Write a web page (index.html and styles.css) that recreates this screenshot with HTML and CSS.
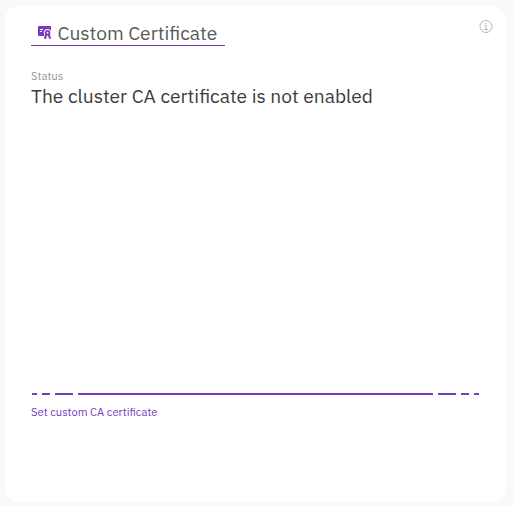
FILE: index.html
```html
<!DOCTYPE html>
<html lang="en">
<head>
<meta charset="utf-8">
<title>Custom Certificate</title>
<link rel="stylesheet" href="styles.css">
</head>
<body>
<main class="card">
  <header class="card-header">
    <h1 class="title">
      <svg class="title-icon" viewBox="0 0 14 14" aria-hidden="true">
        <rect width="13" height="10" rx="1" fill="#753bbd"/>
        <path stroke="#fff" d="M2 3.5h3M2 5.5h2"/>
        <circle cx="9.5" cy="6.8" r="3.7" fill="#fff"/>
        <path fill="#fff" d="M6.5 8.5h6.5V14H5.4z"/>
        <circle cx="9.5" cy="6.8" r="1.9" fill="none" stroke="#753bbd" stroke-width="1.8"/>
        <path fill="#753bbd" d="M7.2 8.5l2 .8-1.3 3.8-2-.6zM11.8 8.5l-2 .8 1.4 3.8 1.9-.6z"/>
      </svg>
      <span class="title-text">Custom Certificate</span>
    </h1>
    <svg class="info" viewBox="0 0 14 14" fill="none" stroke="#b5b5b5" aria-hidden="true">
      <circle cx="7" cy="6.5" r="6"/>
      <path d="M5.5 5.5h1.6v4M5.2 9.5h3.7"/>
      <path d="M6.3 3.5h1.2"/>
    </svg>
  </header>
  <section class="status">
    <div class="label">Status</div>
    <div class="value">The cluster CA certificate is not enabled</div>
  </section>
  <footer class="actions">
    <div class="divider"><i class="dot"></i><i class="dash"></i><i class="bar"></i><i class="line"></i><i class="bar"></i><i class="dash"></i><i class="dot"></i></div>
    <a class="link">Set custom CA certificate</a>
  </footer>
</main>
</body>
</html>
```
FILE: styles.css
```css
* { box-sizing: border-box; }
body {
  margin: 0;
  padding: 6px 7px 3px 5px;
  height: 505px;
  background: #f9f9f9;
  font-family: "IBM Plex Sans", Roboto, sans-serif;
}
.card {
  display: flex;
  flex-direction: column;
  height: 496px;
  padding: 14px 13px 82px 26px;
  border-radius: 14px;
  background: #fff;
}
.card-header {
  display: flex;
  justify-content: space-between;
  align-items: flex-start;
}
.title {
  display: flex;
  width: 194px;
  height: 26px;
  margin: 0;
  padding-left: 7px;
  border-bottom: 1px solid #753bbd;
  font-size: 19.2px;
  font-weight: 400;
  line-height: 25px;
  color: #595959;
}
.title-icon {
  width: 14px;
  height: 14px;
  margin: 6px 5.5px 0 0;
}
.title-text { white-space: nowrap; }
.info { width: 14px; height: 14px; }
.status { margin-top: 23px; white-space: nowrap; }
.label {
  font-size: 11.2px;
  line-height: 14px;
  color: #969696;
}
.value {
  font-size: 19.2px;
  line-height: 26px;
  color: #3c3c3c;
}
.actions { margin-top: auto; }
.divider {
  display: flex;
  gap: 5px;
  width: 447px;
  height: 2px;
  margin-left: 1px;
}
.divider i { height: 2px; background: #753bbd; }
.dot { width: 5px; }
.dash { width: 8px; }
.bar { width: 18px; }
.line { flex: 1; }
.link {
  display: block;
  margin-top: 9px;
  font-size: 11.2px;
  line-height: 16px;
  color: #753bbd;
}
```
